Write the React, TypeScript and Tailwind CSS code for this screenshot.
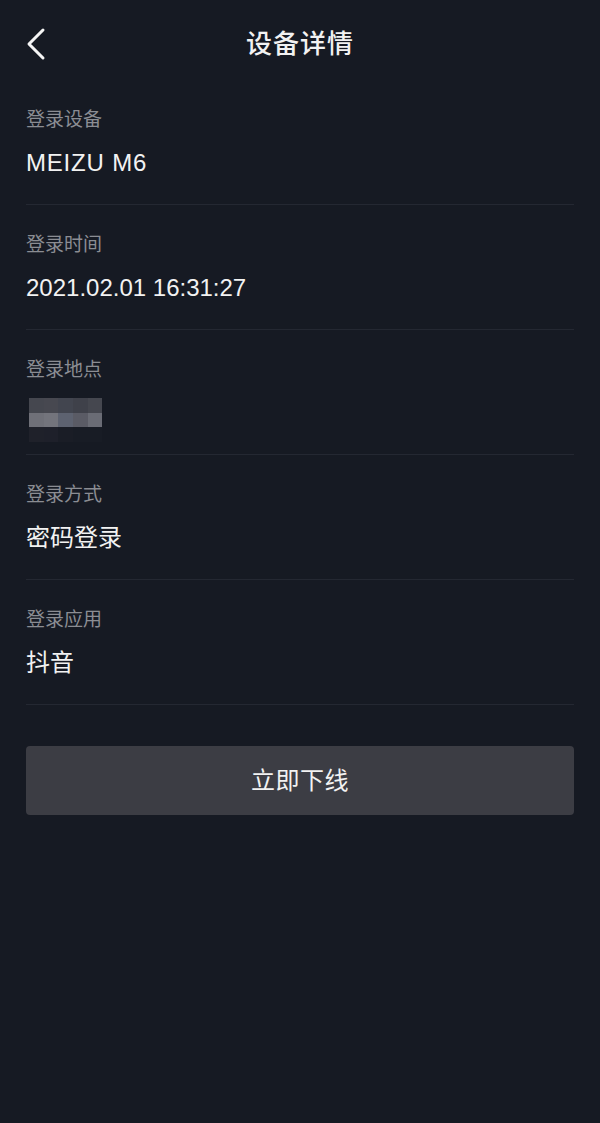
import React from 'react';

const rows: { label: string; value?: string }[] = [
    { label: '登录设备', value: 'MEIZU M6' },
    { label: '登录时间', value: '2021.02.01 16:31:27' },
    { label: '登录地点' },
    { label: '登录方式', value: '密码登录' },
    { label: '登录应用', value: '抖音' },
];

// pixelated (mosaic) location value
const mosaic = [
    ['#45474f', '#474850', '#42454f', '#3f414a', '#45474f'],
    ['#6f7078', '#73747c', '#5d6270', '#5a5b65', '#6a6c75'],
    ['#1f212a', '#1e202a', '#1a1d26', '#181c25', '#181c25'],
];

const Mosaic: React.FC = () => (
    <div className="flex flex-col ml-[3px] h-[30px]">
        {mosaic.map((row, i) => (
            <div key={i} className="flex h-[14.5px] shrink-0">
                {row.map((c, j) => (
                    <div key={j} className="w-[14.7px] h-full" style={{ backgroundColor: c }} />
                ))}
            </div>
        ))}
    </div>
);

const App: React.FC = () => {
    return (
        <div
            className="min-h-[1123px] w-full bg-[#161a23] text-[#f2f2f2]"
            style={{ fontFamily: '"Liberation Sans", "Noto Sans CJK SC", sans-serif' }}
        >
            <header className="relative h-[80px] flex items-center justify-center">
                <button className="absolute left-[22px] top-[24px] w-[30px] h-[40px] flex items-center justify-center">
                    <svg width="30" height="40" viewBox="0 0 30 40" fill="none">
                        <path d="M21 6 L7 20 L21 34" stroke="#f5f5f5" strokeWidth="3" strokeLinecap="round" strokeLinejoin="round" />
                    </svg>
                </button>
                <h1 className="text-[26px] font-medium leading-none mt-[8px] tracking-[1px]">设备详情</h1>
            </header>

            <div className="px-[26px]">
                {rows.map((r) => (
                    <div key={r.label} className="pt-[28px] border-b border-[#242832]">
                        <div className="text-[19px] leading-[24px] text-[#8b8d93]">{r.label}</div>
                        <div className="mt-[16px] mb-[26px] h-[30px] text-[24px] leading-[30px] text-[#f2f2f2]">
                            {r.value ? (
                                <span className={r.value === 'MEIZU M6' ? 'tracking-[0.8px]' : ''}>{r.value}</span>
                            ) : (
                                <Mosaic />
                            )}
                        </div>
                    </div>
                ))}

                <button className="mt-[41px] w-full h-[69px] rounded-[4px] bg-[#3c3d44] text-[24px] text-[#f2f2f2] tracking-[0.5px]">
                    立即下线
                </button>
            </div>
        </div>
    );
};

export default App;
